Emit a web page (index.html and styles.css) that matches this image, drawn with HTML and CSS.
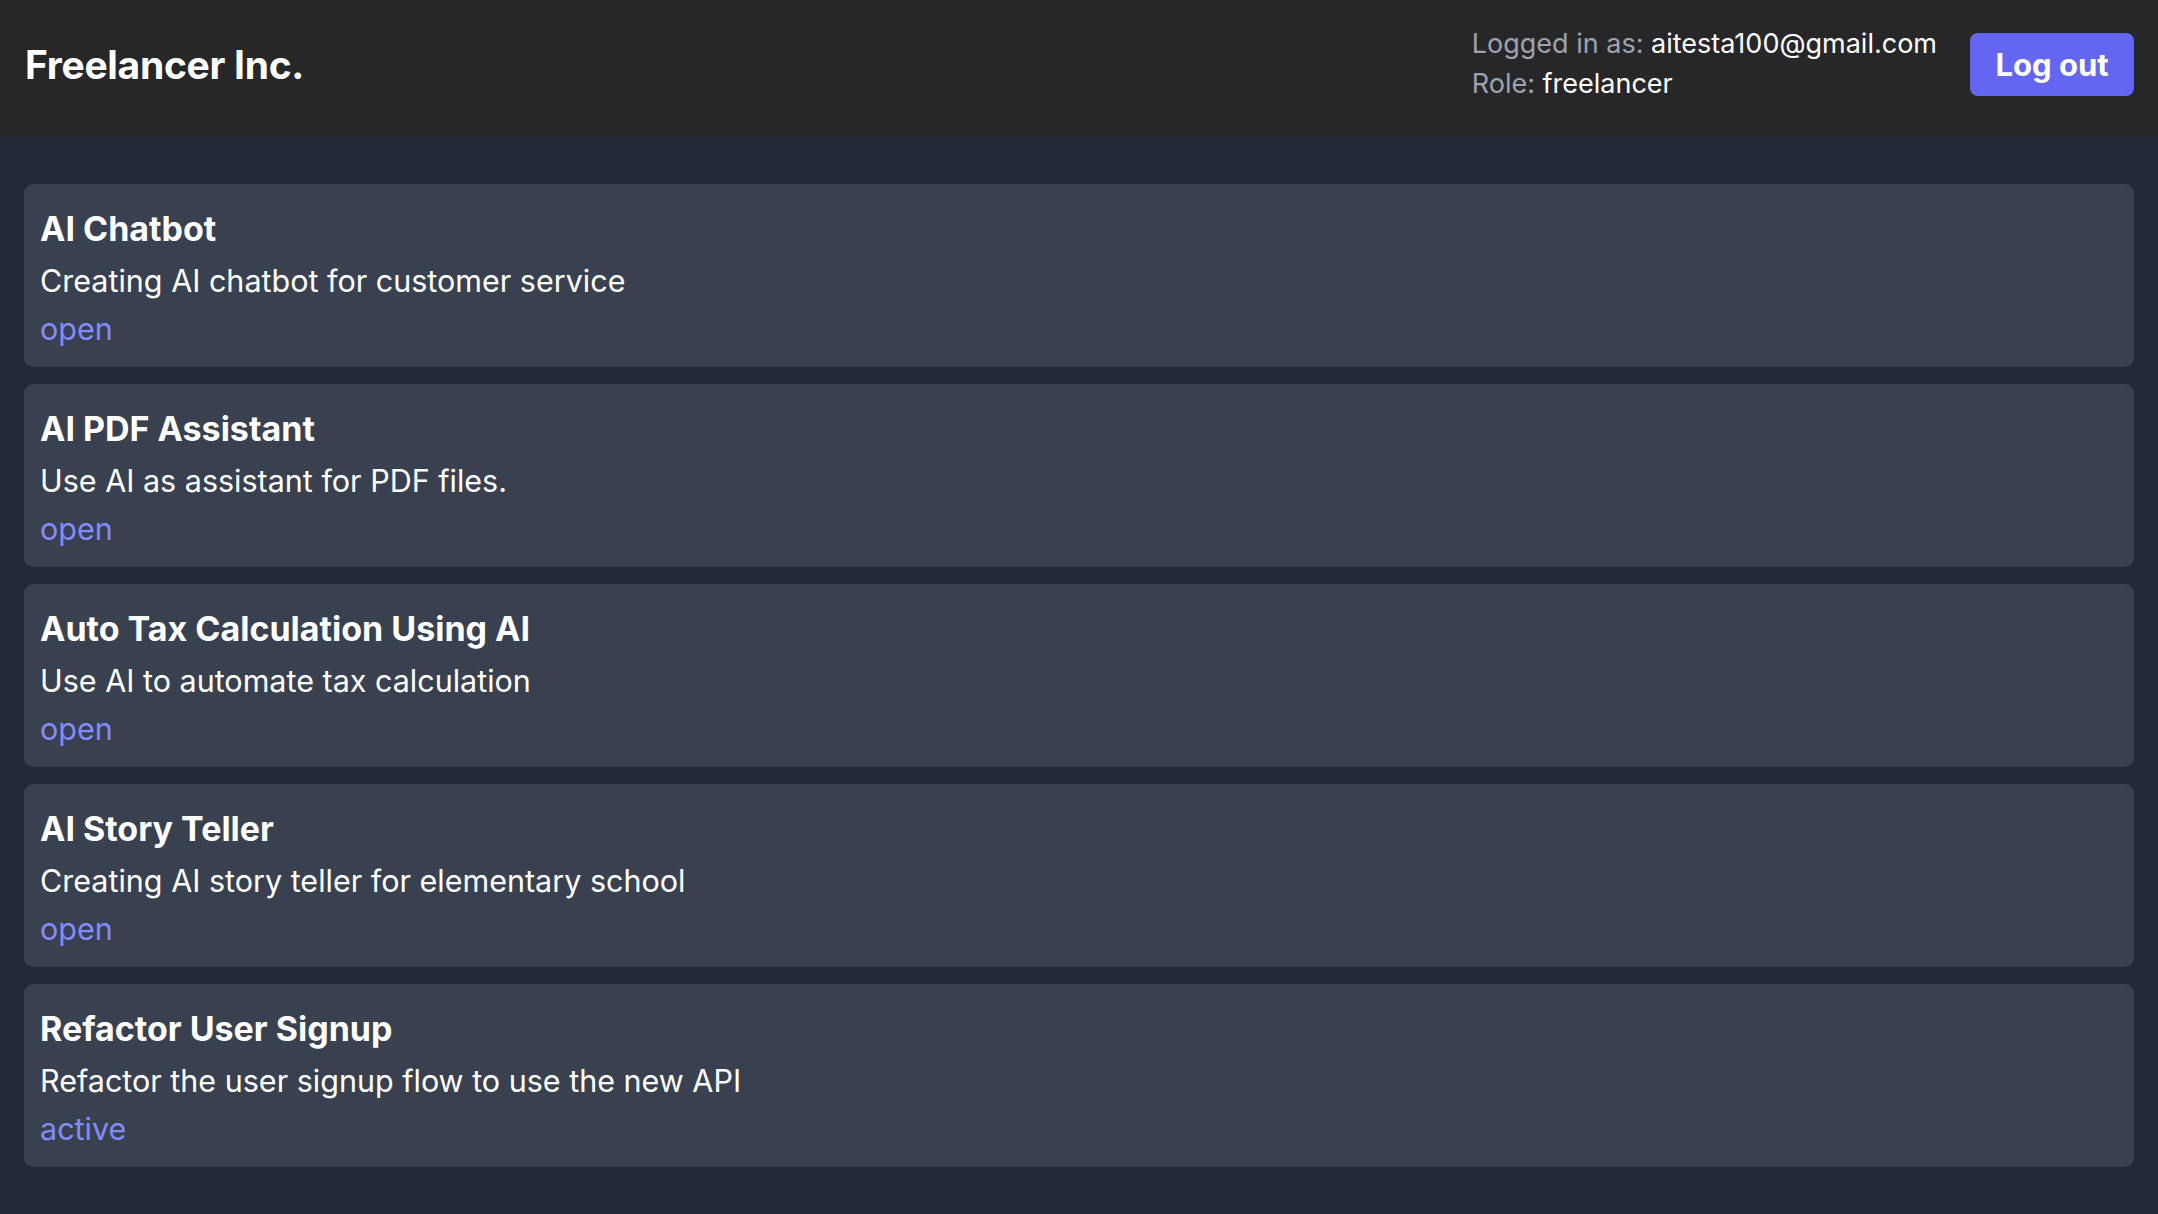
FILE: index.html
```html
<!DOCTYPE html>
<html lang="en">
<head>
<meta charset="utf-8">
<title>Freelancer Inc.</title>
<link rel="stylesheet" href="styles.css">
</head>
<body>
<header class="topbar">
  <h1 class="brand">Freelancer Inc.</h1>
  <div class="account">
    <div class="user-info">
      <div><span class="label">Logged in as:</span> aitesta100@gmail.com</div>
      <div><span class="label">Role:</span> freelancer</div>
    </div>
    <button class="logout">Log out</button>
  </div>
</header>
<main class="projects">
  <article class="card">
    <h2 class="card-title">AI Chatbot</h2>
    <p class="card-desc">Creating AI chatbot for customer service</p>
    <p class="card-status">open</p>
  </article>
  <article class="card">
    <h2 class="card-title">AI PDF Assistant</h2>
    <p class="card-desc">Use AI as assistant for PDF files.</p>
    <p class="card-status">open</p>
  </article>
  <article class="card">
    <h2 class="card-title">Auto Tax Calculation Using AI</h2>
    <p class="card-desc">Use AI to automate tax calculation</p>
    <p class="card-status">open</p>
  </article>
  <article class="card">
    <h2 class="card-title">AI Story Teller</h2>
    <p class="card-desc">Creating AI story teller for elementary school</p>
    <p class="card-status">open</p>
  </article>
  <article class="card">
    <h2 class="card-title">Refactor User Signup</h2>
    <p class="card-desc">Refactor the user signup flow to use the new API</p>
    <p class="card-status">active</p>
  </article>
</main>
</body>
</html>
```
FILE: styles.css
```css
html, body {
  margin: 0;
  padding: 0;
}
body {
  background: #212836;
  color: #ffffff;
  font-family: Inter, "Noto Sans", "Liberation Sans", sans-serif;
  min-height: 1214px;
}
.topbar {
  height: 137px;
  box-sizing: border-box;
  background: #272729;
  display: flex;
  align-items: center;
  justify-content: space-between;
  padding: 0 24px 9px 25px;
}
.brand {
  margin: 0;
  font-size: 39px;
  font-weight: 700;
  letter-spacing: -0.3px;
}
.account {
  display: flex;
  align-items: center;
  gap: 33px;
}
.user-info {
  font-size: 27px;
  line-height: 40px;
}
.label {
  color: #9ca3af;
}
.logout {
  background: #6366f1;
  color: #ffffff;
  border: none;
  border-radius: 8px;
  width: 164px;
  height: 63px;
  font-family: inherit;
  font-size: 31px;
  font-weight: 700;
  padding: 0;
}
.projects {
  padding: 47px 24px 40px;
  display: flex;
  flex-direction: column;
  gap: 17px;
}
.card {
  background: #394150;
  border-radius: 9px;
  padding: 23px 16px 19px;
}
.card-title {
  margin: 0 0 11px;
  font-size: 34px;
  line-height: 44px;
  font-weight: 700;
}
.card-desc {
  margin: 0 0 10px;
  font-size: 30.5px;
  line-height: 38px;
}
.card-status {
  margin: 0;
  font-size: 30.5px;
  line-height: 38px;
  color: #818cf8;
}
```
